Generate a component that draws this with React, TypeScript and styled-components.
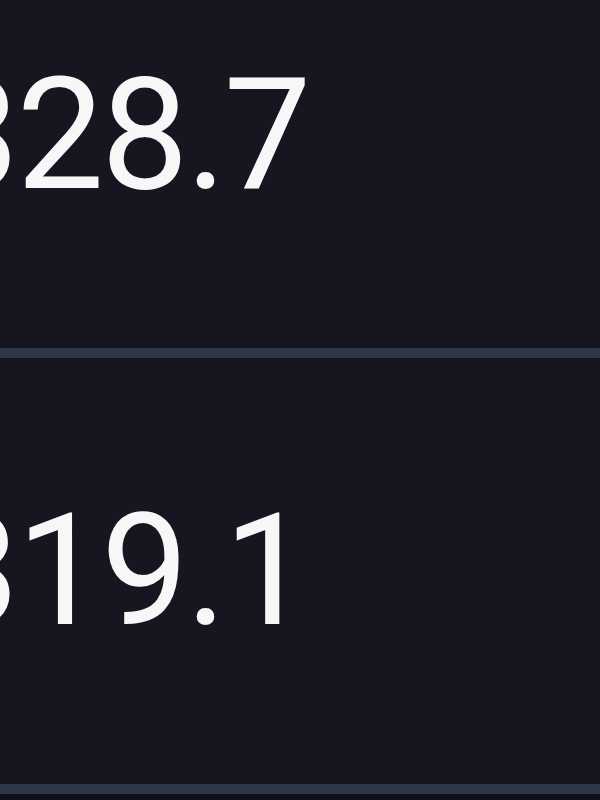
import styled, { createGlobalStyle } from "styled-components";

const GlobalStyle = createGlobalStyle`
  html, body {
    margin: 0;
    padding: 0;
    background-color: #0f1018;
    overflow: hidden;
  }
`;

const Page = styled.div`
  width: 600px;
  height: 800px;
  overflow: hidden;
  background-color: #0f1018;
`;

const List = styled.div`
  margin-top: -78px;
  display: flex;
  flex-direction: column;
  background-color: #161621;
`;

const Row = styled.div`
  height: 426px;
  display: flex;
  align-items: center;
  border-bottom: 10px solid #2f3849;
`;

const Value = styled.span`
  margin-left: -68px;
  font-family: Roboto, "Liberation Sans", sans-serif;
  font-size: 156px;
  line-height: 156px;
  letter-spacing: -0.02em;
  color: #f7f7f7;
  white-space: nowrap;
`;

const readings = ["328.7", "319.1"];

export default function App() {
  return (
    <Page>
      <GlobalStyle />
      <List>
        {readings.map((r) => (
          <Row key={r}>
            <Value>{r}</Value>
          </Row>
        ))}
      </List>
    </Page>
  );
}
